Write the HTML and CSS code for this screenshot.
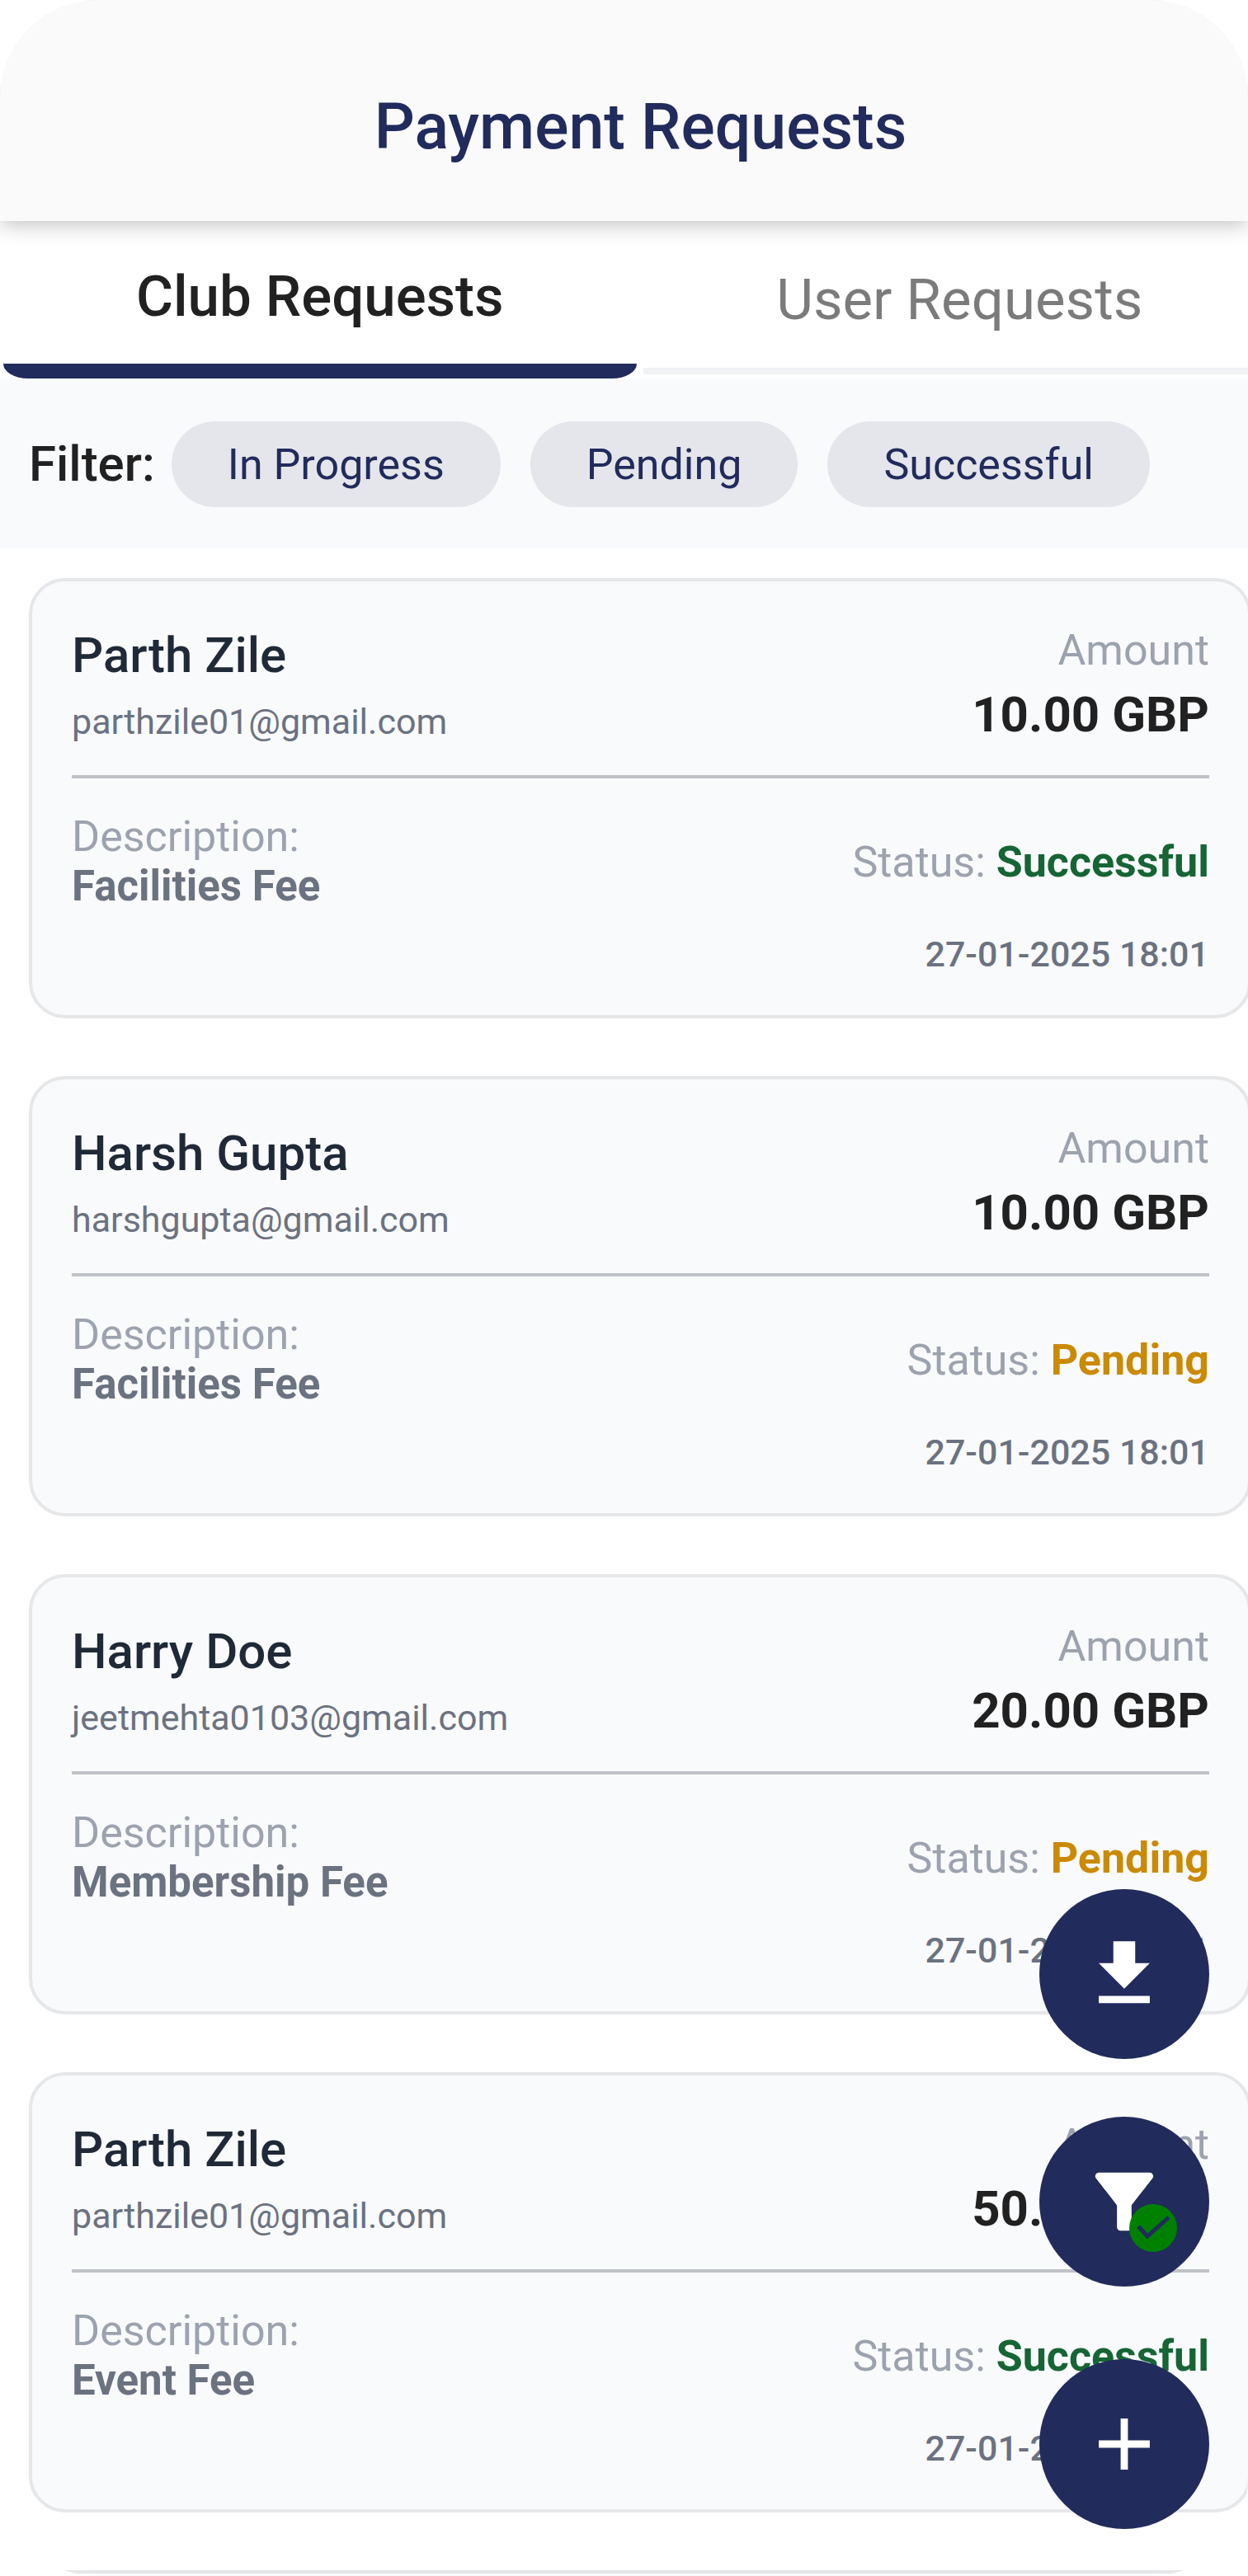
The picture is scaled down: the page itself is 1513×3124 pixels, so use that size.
FILE: index.html
```html
<!DOCTYPE html>
<html lang="en">
<head>
<meta charset="utf-8">
<meta name="viewport" content="width=device-width, initial-scale=1">
<title>Payment Requests</title>
<link rel="stylesheet" href="styles.css">
</head>
<body>
<div class="screen">
  <header class="header">
    <h1 class="title">Payment Requests</h1>
  </header>

  <nav class="tabs">
    <a class="tab tab-active" href="#club" aria-current="page">Club Requests</a>
    <a class="tab" href="#user">User Requests</a>
  </nav>

  <section class="filters">
    <span class="filters-label">Filter:</span>
    <div class="chips">
      <button class="chip" type="button">In Progress</button>
      <button class="chip" type="button">Pending</button>
      <button class="chip" type="button">Successful</button>
    </div>
  </section>

  <main class="list">
    <article class="card">
      <div class="row">
        <div class="person">
          <h2 class="name">Parth Zile</h2>
          <p class="email">parthzile01@gmail.com</p>
        </div>
        <div class="side">
          <p class="label amount-label">Amount</p>
          <p class="amount">10.00 GBP</p>
        </div>
      </div>
      <hr class="divider">
      <div class="row">
        <div class="about">
          <p class="label">Description:</p>
          <p class="value">Facilities Fee</p>
        </div>
        <div class="side state">
          <p class="label">Status: <strong class="successful">Successful</strong></p>
          <time class="date">27-01-2025 18:01</time>
        </div>
      </div>
    </article>

    <article class="card">
      <div class="row">
        <div class="person">
          <h2 class="name">Harsh Gupta</h2>
          <p class="email">harshgupta@gmail.com</p>
        </div>
        <div class="side">
          <p class="label amount-label">Amount</p>
          <p class="amount">10.00 GBP</p>
        </div>
      </div>
      <hr class="divider">
      <div class="row">
        <div class="about">
          <p class="label">Description:</p>
          <p class="value">Facilities Fee</p>
        </div>
        <div class="side state">
          <p class="label">Status: <strong class="pending">Pending</strong></p>
          <time class="date">27-01-2025 18:01</time>
        </div>
      </div>
    </article>

    <article class="card">
      <div class="row">
        <div class="person">
          <h2 class="name">Harry Doe</h2>
          <p class="email">jeetmehta0103@gmail.com</p>
        </div>
        <div class="side">
          <p class="label amount-label">Amount</p>
          <p class="amount">20.00 GBP</p>
        </div>
      </div>
      <hr class="divider">
      <div class="row">
        <div class="about">
          <p class="label">Description:</p>
          <p class="value">Membership Fee</p>
        </div>
        <div class="side state">
          <p class="label">Status: <strong class="pending">Pending</strong></p>
          <time class="date">27-01-2025 18:01</time>
        </div>
      </div>
    </article>

    <article class="card">
      <div class="row">
        <div class="person">
          <h2 class="name">Parth Zile</h2>
          <p class="email">parthzile01@gmail.com</p>
        </div>
        <div class="side">
          <p class="label amount-label">Amount</p>
          <p class="amount">50.00 GBP</p>
        </div>
      </div>
      <hr class="divider">
      <div class="row">
        <div class="about">
          <p class="label">Description:</p>
          <p class="value">Event Fee</p>
        </div>
        <div class="side state">
          <p class="label">Status: <strong class="successful">Successful</strong></p>
          <time class="date">27-01-2025 18:01</time>
        </div>
      </div>
    </article>

    <article class="card"></article>
  </main>

  <div class="actions">
    <button class="fab" type="button" aria-label="Download">
      <svg class="icon" viewBox="0 0 24 24" aria-hidden="true"><path d="M19 9h-4V3H9v6H5l7 7 7-7zM5 18v2h14v-2H5z"/></svg>
    </button>
    <button class="fab" type="button" aria-label="Filter">
      <svg class="icon" viewBox="0 0 24 24" aria-hidden="true"><path d="M4.25 5.61C6.27 8.2 10 13 10 13v6c0 .55.45 1 1 1h2c.55 0 1-.45 1-1v-6s3.72-4.8 5.74-7.39A.998.998 0 0 0 18.95 4H5.04c-.83 0-1.3.95-.79 1.61z"/></svg>
      <svg class="badge" viewBox="0 0 60 60" aria-hidden="true"><circle cx="30" cy="30" r="29"/><path d="M12 28l11 12 26-23"/></svg>
    </button>
    <button class="fab fab-add" type="button" aria-label="Add">
      <svg class="icon" viewBox="0 0 24 24" aria-hidden="true"><path d="M19 13h-6v6h-2v-6H5v-2h6V5h2v6h6z"/></svg>
    </button>
  </div>
</div>
</body>
</html>
```

FILE: styles.css
```css
* {
  box-sizing: border-box;
}

body,
h1,
h2,
p {
  margin: 0;
}

body {
  background: #fff;
  font-family: Roboto, "Liberation Sans", sans-serif;
  color: #212121;
}

button {
  border: 0;
  font-family: inherit;
}

.screen {
  position: relative;
  display: flex;
  flex-direction: column;
  height: 100vh;
  border-radius: 118px;
  overflow: hidden;
}

.header {
  position: relative;
  z-index: 1;
  flex: none;
  padding: 104px 24px 64px 64px;
  background: #fafafa;
  box-shadow: 0 4px 24px rgba(0, 0, 0, 0.25);
}

.title {
  font-size: 77px;
  line-height: 100px;
  font-weight: 500;
  text-align: center;
  color: #212b5c;
}

/* Tabs */

.tabs {
  flex: none;
  display: flex;
  gap: 8px;
  padding-left: 4px;
  margin-right: -34px;
}

.tab {
  flex: 1;
  display: flex;
  flex-direction: column;
  font-size: 69px;
  line-height: 80px;
  padding-top: 56px;
  text-align: center;
  text-decoration: none;
  color: #7b7b7b;
}

.tab::after {
  content: "";
  height: 8px;
  margin-top: 42px;
  background: #f1f2f4;
}

.tab-active {
  padding-top: 52px;
  font-weight: 500;
  color: #212121;
}

.tab-active::after {
  height: 18px;
  margin-top: 41px;
  border-radius: 0 0 30px 30px / 0 0 18px 18px;
  background: #212b5c;
}

/* Filters */

.filters {
  flex: none;
  display: flex;
  align-items: center;
  gap: 20px;
  padding: 52px 36px 50px 35px;
  background: #f9fafc;
}

.filters-label {
  font-size: 60px;
  line-height: 64px;
  font-weight: 500;
}

.chips {
  display: flex;
  gap: 36px;
}

.chip {
  padding: 21px 68px 19px;
  border-radius: 52px;
  background: #e5e6eb;
  color: #212b5c;
  font-size: 52px;
  line-height: 64px;
}

/* Request cards */

.list {
  flex: 1;
  min-height: 0;
  display: flex;
  flex-direction: column;
  gap: 70px;
  padding: 36px 0 0 35px;
}

.card {
  flex: none;
  margin-right: -4px;
  padding: 48px 47px 44px 48px;
  border: 4px solid #e6e7e9;
  border-radius: 44px;
  background: #f9fafc;
}

.row {
  display: flex;
  justify-content: space-between;
}

.side {
  text-align: right;
}

.name {
  font-size: 60px;
  line-height: 84px;
  font-weight: 500;
  color: #1f2937;
}

.email {
  margin-top: 8px;
  font-size: 43px;
  line-height: 60px;
  color: #6b7280;
}

.label {
  font-size: 52px;
  line-height: 60px;
  color: #9ca3af;
}

.amount-label {
  line-height: 72px;
}

.amount {
  font-size: 60px;
  line-height: 84px;
  font-weight: 700;
}

.divider {
  height: 4px;
  margin: 31px 0 41px;
  border: 0;
  background: #bfc2c8;
}

.value {
  font-size: 51px;
  line-height: 60px;
  font-weight: 700;
  color: #6b7280;
}

.state {
  display: flex;
  flex-direction: column;
  gap: 51px;
  padding-top: 31px;
}

.state strong {
  font-weight: 700;
}

.successful {
  color: #166534;
}

.pending {
  color: #ca8a04;
}

.date {
  font-size: 43px;
  line-height: 60px;
  font-weight: 500;
  color: #6b7280;
}

/* Floating actions */

.actions {
  position: absolute;
  right: 47px;
  bottom: 57px;
  display: flex;
  flex-direction: column;
  gap: 70px;
}

.fab {
  position: relative;
  display: flex;
  align-items: center;
  justify-content: center;
  width: 206px;
  height: 206px;
  padding: 0;
  border-radius: 50%;
  background: #212b5c;
}

.fab-add {
  margin-top: 18px;
}

.icon {
  width: 106px;
  height: 106px;
  fill: #fff;
}

.badge {
  position: absolute;
  left: 108px;
  top: 105px;
  width: 60px;
  height: 60px;
  fill: #008000;
}

.badge path {
  fill: none;
  stroke: #212b5c;
  stroke-width: 5;
}
```
